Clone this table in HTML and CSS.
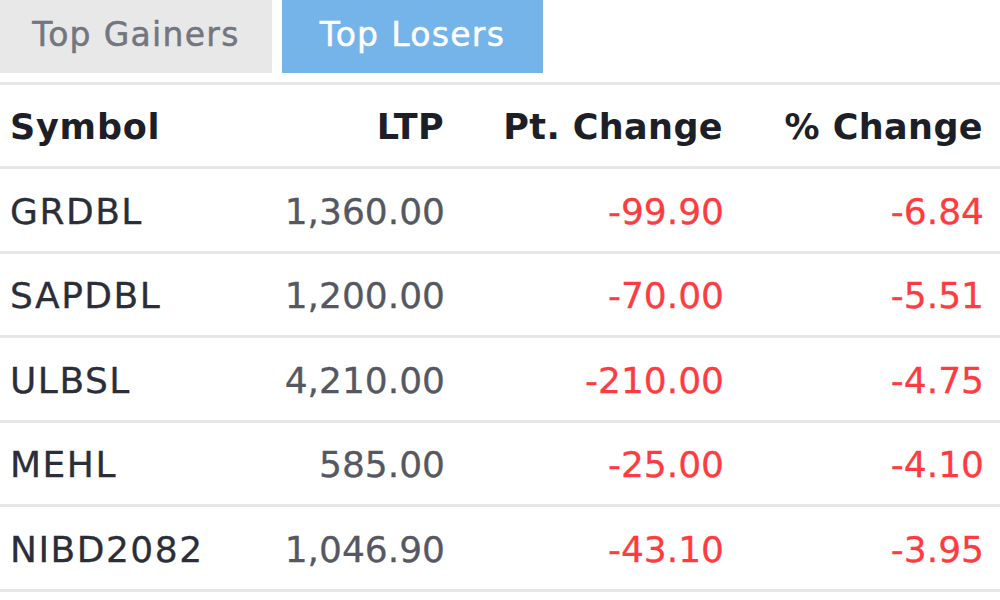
FILE: index.html
```html
<!DOCTYPE html>
<html lang="en">
<head>
<meta charset="utf-8">
<title>Top Losers</title>
<link rel="stylesheet" href="styles.css">
</head>
<body>
<div class="widget">
  <div class="tabs">
    <div class="tab">Top Gainers</div>
    <div class="tab active">Top Losers</div>
  </div>
  <div class="table">
    <div class="row head">
      <div class="c sym">Symbol</div>
      <div class="c num">LTP</div>
      <div class="c num">Pt. Change</div>
      <div class="c num">% Change</div>
    </div>
    <div class="row">
      <div class="c sym">GRDBL</div>
      <div class="c num ltp">1,360.00</div>
      <div class="c num neg">-99.90</div>
      <div class="c num neg">-6.84</div>
    </div>
    <div class="row">
      <div class="c sym">SAPDBL</div>
      <div class="c num ltp">1,200.00</div>
      <div class="c num neg">-70.00</div>
      <div class="c num neg">-5.51</div>
    </div>
    <div class="row">
      <div class="c sym">ULBSL</div>
      <div class="c num ltp">4,210.00</div>
      <div class="c num neg">-210.00</div>
      <div class="c num neg">-4.75</div>
    </div>
    <div class="row">
      <div class="c sym">MEHL</div>
      <div class="c num ltp">585.00</div>
      <div class="c num neg">-25.00</div>
      <div class="c num neg">-4.10</div>
    </div>
    <div class="row">
      <div class="c sym">NIBD2082</div>
      <div class="c num ltp">1,046.90</div>
      <div class="c num neg">-43.10</div>
      <div class="c num neg">-3.95</div>
    </div>
  </div>
</div>
</body>
</html>
```

FILE: styles.css
```css
html, body {
  margin: 0;
  padding: 0;
  background: #ffffff;
}

.widget {
  width: 1000px;
  font-family: "DejaVu Sans", "Open Sans", sans-serif;
}

.tabs {
  display: flex;
  gap: 10px;
  height: 73px;
  margin-bottom: 9px;
}

.tab {
  display: flex;
  align-items: center;
  justify-content: center;
  width: 272px;
  background: #e8e8e8;
  color: #737680;
  font-size: 33px;
  letter-spacing: 1.3px;
  -webkit-text-stroke: 0.5px currentColor;
  padding: 0 0 5px 0;
  box-sizing: border-box;
}

.tab.active {
  width: 261px;
  background: #74b4e9;
  color: #ffffff;
}

.table {
  border-top: 3px solid #e6e7e8;
}

.row {
  display: grid;
  grid-template-columns: 190px 243px 279px 260px;
  padding: 3px 18px 0 10px;
  height: 84.5px;
  box-sizing: border-box;
  border-bottom: 3px solid #e6e7e8;
  align-items: center;
  font-size: 36px;
  color: #2b2e38;
  -webkit-text-stroke: 0.3px currentColor;
}

.row.head {
  height: 84px;
  padding-top: 2px;
  font-size: 35px;
  font-weight: 700;
  letter-spacing: 0.4px;
  color: #1c1f27;
  -webkit-text-stroke: 0;
}

.c {
  white-space: nowrap;
}

.sym {
  letter-spacing: 1.5px;
}

.head .sym {
  letter-spacing: 0.8px;
}

.num {
  text-align: right;
  margin-right: -2px;
}

.head .num {
  margin-right: -1px;
}

.ltp {
  color: #555861;
}

.neg {
  color: #ff3b3f;
}
```
